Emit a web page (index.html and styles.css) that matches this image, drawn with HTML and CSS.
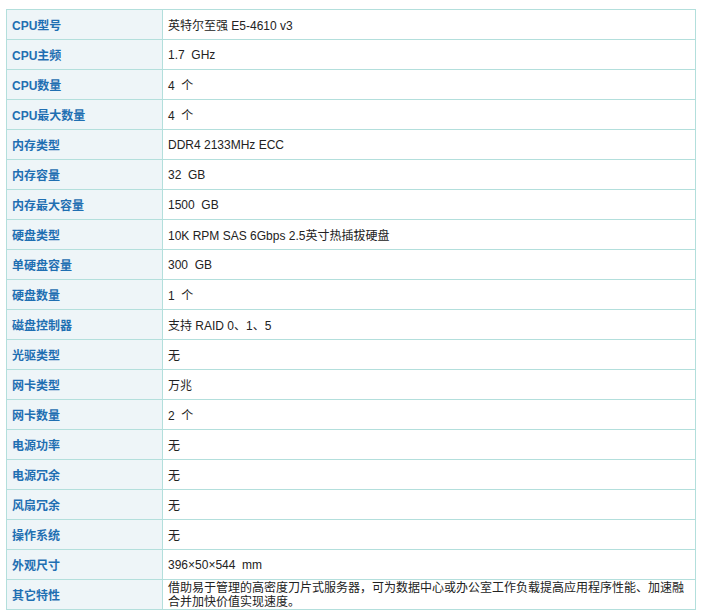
FILE: index.html
```html
<!DOCTYPE html>
<html lang="zh">
<head>
<meta charset="utf-8">
<link rel="stylesheet" href="styles.css">
</head>
<body>
<table class="spec">
<tr><th>CPU型号</th><td>英特尔至强 E5-4610 v3</td></tr>
<tr><th>CPU主频</th><td>1.7&nbsp; GHz</td></tr>
<tr><th>CPU数量</th><td>4&nbsp; 个</td></tr>
<tr><th>CPU最大数量</th><td>4&nbsp; 个</td></tr>
<tr><th>内存类型</th><td>DDR4 2133MHz ECC</td></tr>
<tr><th>内存容量</th><td>32&nbsp; GB</td></tr>
<tr><th>内存最大容量</th><td>1500&nbsp; GB</td></tr>
<tr><th>硬盘类型</th><td>10K RPM SAS 6Gbps 2.5英寸热插拔硬盘</td></tr>
<tr><th>单硬盘容量</th><td>300&nbsp; GB</td></tr>
<tr><th>硬盘数量</th><td>1&nbsp; 个</td></tr>
<tr><th>磁盘控制器</th><td>支持 RAID 0、1、5</td></tr>
<tr><th>光驱类型</th><td>无</td></tr>
<tr><th>网卡类型</th><td>万兆</td></tr>
<tr><th>网卡数量</th><td>2&nbsp; 个</td></tr>
<tr><th>电源功率</th><td>无</td></tr>
<tr><th>电源冗余</th><td>无</td></tr>
<tr><th>风扇冗余</th><td>无</td></tr>
<tr><th>操作系统</th><td>无</td></tr>
<tr><th>外观尺寸</th><td>396×50×544&nbsp; mm</td></tr>
<tr><th>其它特性</th><td class="multi">借助易于管理的高密度刀片式服务器，可为数据中心或办公室工作负载提高应用程序性能、加速融合并加快价值实现速度。</td></tr>
</table>
</body>
</html>
```

FILE: styles.css
```css
html, body {
  margin: 0;
  padding: 0;
  background: #fff;
}
body {
  padding: 9px 0 0 6px;
  font-family: "Liberation Sans", Arial, "Noto Sans CJK SC", sans-serif;
  font-size: 12px;
  color: #222;
}
.spec {
  border-collapse: collapse;
  width: 690px;
  table-layout: fixed;
}
.spec th, .spec td {
  border: 1px solid #b3dfdc;
  height: 30px;
  padding: 0 5px;
  text-align: left;
  vertical-align: middle;
  box-sizing: border-box;
}
.spec th {
  width: 156px;
  background: #eef5f8;
  color: #1f6fb2;
  font-weight: bold;
}
.spec td {
  color: #222;
}
.spec td.multi {
  line-height: 14px;
}
```
